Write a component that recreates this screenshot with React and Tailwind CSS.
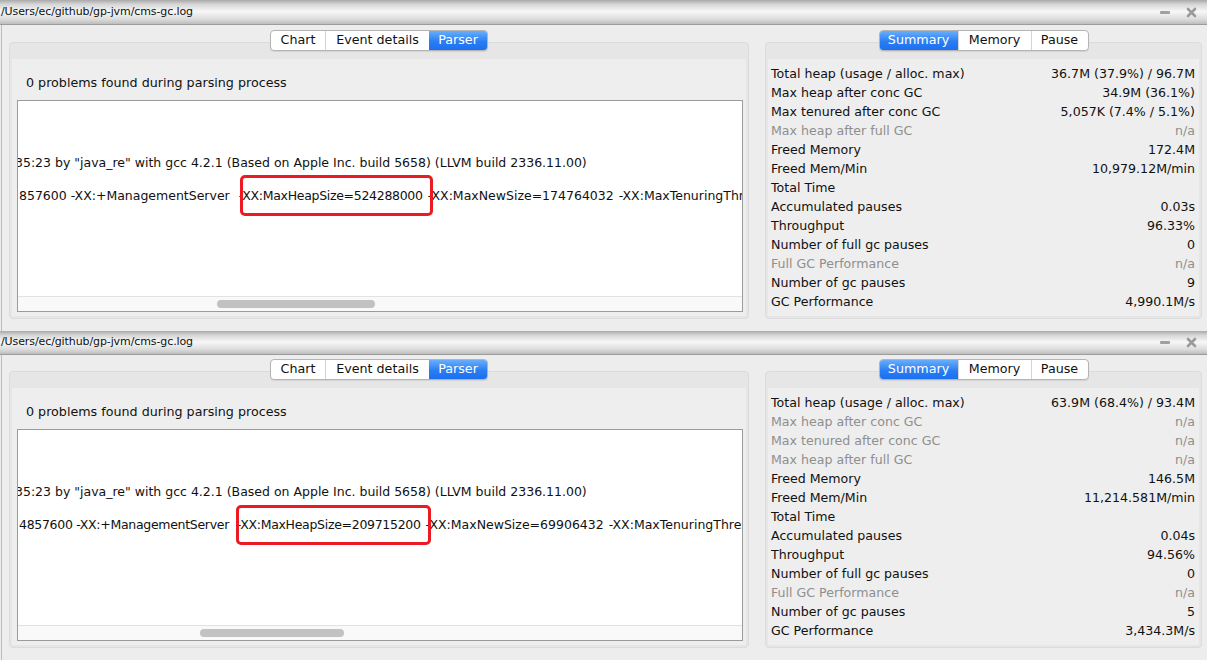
import React from "react";

const font = "font-['DejaVu_Sans',_'Liberation_Sans',_sans-serif]";

function TitleBar({ h }) {
  return (
    <div
      className={`${h} flex items-center justify-between border-b border-[#9c9c9c] bg-[linear-gradient(to_bottom,#a9a9a9_0%,#d6d6d6_18%,#f7f7f7_48%,#dcdcdc_80%,#bdbdbd_100%)] pl-[1px] pr-[10px]`}
    >
      <span className="text-[11px] text-[#111] tracking-[-0.1px]">/Users/ec/github/gp-jvm/cms-gc.log</span>
      <div className="flex items-center gap-[16px]">
        <div className="w-[10px] h-[3px] bg-[#a0a0a0] rounded-[1px]" />
        <svg width="11" height="11" viewBox="0 0 11 11">
          <path d="M2 2 L9 9 M9 2 L2 9" stroke="#9a9a9a" strokeWidth="2.6" strokeLinecap="round" />
        </svg>
      </div>
    </div>
  );
}

function Tabs({ items, active }) {
  return (
    <div className="relative z-10 flex h-[21px] rounded-[4px] border border-[#b4b4b4] bg-white shadow-[0_1px_1px_rgba(0,0,0,0.08)] overflow-hidden">
      {items.map((t, i) => {
        const on = t.label === active;
        return (
          <div
            key={t.label}
            className={`${t.w} flex items-center justify-center text-[12.7px] leading-none ${
              on
                ? "bg-[linear-gradient(to_bottom,#68aefa,#2a7ef3_55%,#1c6ff0)] text-white"
                : "text-[#111]"
            } ${i > 0 && !on ? "border-l border-[#d4d4d4]" : ""}`}
          >
            {t.label}
          </div>
        );
      })}
    </div>
  );
}

function LeftPanel({ data }) {
  return (
    <div className="flex flex-col items-center w-[740px]">
      <Tabs
        items={[
          { label: "Chart", w: "w-[54px]" },
          { label: "Event details", w: "w-[104px]" },
          { label: "Parser", w: "w-[58px]" },
        ]}
        active="Parser"
      />
      <div className={`mt-[-9px] w-full ${data.panelH} rounded-[4px] border border-[#dbdbdb] bg-[#e6e6e6] pt-[16px] px-[2px] pb-[2px]`}>
        <div className="h-full bg-[#eeeeee] pl-[5px] pr-[3px] pt-[16px] flex flex-col">
          <div className="pl-[9px] h-[16px] text-[12.7px] leading-[16px] text-[#111]">
            0 problems found during parsing process
          </div>
          <div className="mt-[9px] relative flex-1 border border-[#9b9b9b] bg-white flex flex-col mb-[4px]">
            <div className="flex-1 overflow-hidden whitespace-nowrap text-[12.5px] text-[#111] pt-[53px]">
              <div className="leading-[18px] ml-[-3px]">
                35:23 by "java_re" with gcc 4.2.1 (Based on Apple Inc. build 5658) (LLVM build 2336.11.00)
              </div>
              <div className="leading-[18px] mt-[15px] ml-[1px]">
                <span className={data.preTrack}>{data.pre}</span>
                <span className={`tracking-[-0.3px] ${data.keyMl}`}>{data.key}</span>
                <span className="[word-spacing:1px]">{data.post}</span>
              </div>
            </div>
            <div className="h-[15px] border-t border-[#e2e2e2] bg-[#f9f9f9] relative">
              <div className={`absolute top-[3px] h-[8px] rounded-full bg-[#c2c2c2] ${data.thumb}`} />
            </div>
            <div className={`absolute ${data.box} border-[3px] border-[#ec1b23] rounded-[5px]`} />
          </div>
        </div>
      </div>
    </div>
  );
}

function RightPanel({ rows, panelH }) {
  return (
    <div className="flex flex-col items-center w-[437px]">
      <Tabs
        items={[
          { label: "Summary", w: "w-[78px]" },
          { label: "Memory", w: "w-[73px]" },
          { label: "Pause", w: "w-[57px]" },
        ]}
        active="Summary"
      />
      <div className={`mt-[-9px] w-full ${panelH} rounded-[4px] border border-[#dbdbdb] bg-[#e6e6e6] pt-[16px] px-[2px] pb-[2px]`}>
        <div className="h-full bg-[#eeeeee] pl-[3px] pr-[4px] pt-[6px]">
          {rows.map(([k, v, dim]) => (
            <div
              key={k}
              className={`flex justify-between h-[19px] items-center text-[12.6px] ${dim ? "text-[#8f8f8f]" : "text-[#111]"}`}
            >
              <span>{k}</span>
              {v ? <span>{v}</span> : null}
            </div>
          ))}
        </div>
      </div>
    </div>
  );
}

function Window({ titleH, bodyPt, data, rows }) {
  return (
    <div className="flex flex-col">
      <TitleBar h={titleH} />
      <div className={`flex ${bodyPt} pl-[7px] gap-[16px] border-l border-[#bcbcbc] ml-[1px]`}>
        <LeftPanel data={data} />
        <RightPanel rows={rows} panelH={data.panelH} />
      </div>
    </div>
  );
}

const rows1 = [
  ["Total heap (usage / alloc. max)", "36.7M (37.9%) / 96.7M"],
  ["Max heap after conc GC", "34.9M (36.1%)"],
  ["Max tenured after conc GC", "5,057K (7.4% / 5.1%)"],
  ["Max heap after full GC", "n/a", true],
  ["Freed Memory", "172.4M"],
  ["Freed Mem/Min", "10,979.12M/min"],
  ["Total Time", ""],
  ["Accumulated pauses", "0.03s"],
  ["Throughput", "96.33%"],
  ["Number of full gc pauses", "0"],
  ["Full GC Performance", "n/a", true],
  ["Number of gc pauses", "9"],
  ["GC Performance", "4,990.1M/s"],
];

const rows2 = [
  ["Total heap (usage / alloc. max)", "63.9M (68.4%) / 93.4M"],
  ["Max heap after conc GC", "n/a", true],
  ["Max tenured after conc GC", "n/a", true],
  ["Max heap after full GC", "n/a", true],
  ["Freed Memory", "146.5M"],
  ["Freed Mem/Min", "11,214.581M/min"],
  ["Total Time", ""],
  ["Accumulated pauses", "0.04s"],
  ["Throughput", "94.56%"],
  ["Number of full gc pauses", "0"],
  ["Full GC Performance", "n/a", true],
  ["Number of gc pauses", "5"],
  ["GC Performance", "3,434.3M/s"],
];

export default function App() {
  return (
    <div className={`w-[1207px] h-[660px] overflow-hidden bg-[#ededed] ${font}`}>
      <Window
        titleH="h-[25px]"
        bodyPt="pt-[5px] h-[306px]"
        rows={rows1}
        data={{
          panelH: "h-[277px]",
          pre: "857600 -XX:+ManagementServer ",
          preTrack: "",
          keyMl: "ml-[5px]",
          key: "-XX:MaxHeapSize=524288000",
          post: " -XX:MaxNewSize=174764032 -XX:MaxTenuringThreshold=15",
          thumb: "left-[199px] w-[158px]",
          box: "left-[222px] top-[74px] w-[193px] h-[41px]",
        }}
      />
      <Window
        titleH="h-[24px]"
        bodyPt="pt-[4px] h-[305px]"
        rows={rows2}
        data={{
          panelH: "h-[277px]",
          pre: "4857600 -XX:+ManagementServer ",
          preTrack: "tracking-[-0.3px]",
          keyMl: "ml-[4px]",
          key: "-XX:MaxHeapSize=209715200",
          post: " -XX:MaxNewSize=69906432 -XX:MaxTenuringThreshold=15",
          thumb: "left-[182px] w-[144px]",
          box: "left-[218px] top-[75px] w-[195px] h-[40px]",
        }}
      />
    </div>
  );
}
